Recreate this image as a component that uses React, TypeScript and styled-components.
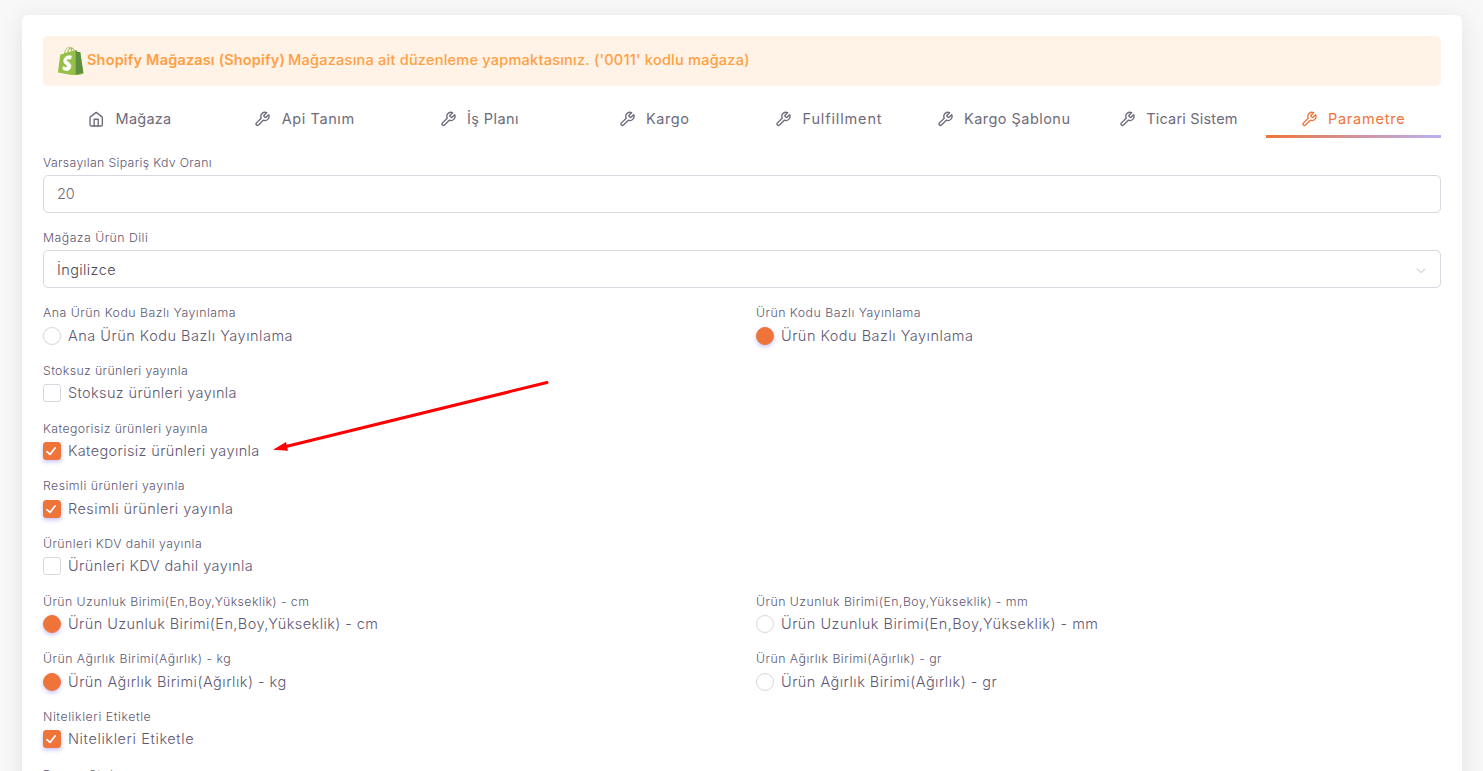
import React from "react";
import styled, { createGlobalStyle, css } from "styled-components";
import { FiHome, FiTool } from "react-icons/fi";

const color = {
  primary: "#ee7439",
  text: "#6e6b7b",
  heading: "#5e5873",
  border: "#d8d6de",
  warning: "#ff9f43",
};

const GlobalStyle = createGlobalStyle`
  *, *::before, *::after { box-sizing: border-box; }
  html, body { margin: 0; height: 771px; overflow: hidden; }
  body {
    background: #f8f8f8;
    color: ${color.text};
    font-family: Inter, "Open Sans", sans-serif;
    font-size: 14.5px;
    font-weight: 300;
  }
`;

const Page = styled.main`
  position: relative;
  height: 771px;
  overflow: hidden;
  padding: 15px 21px 0 22px;
`;

const Card = styled.section`
  height: 800px;
  padding: 21px;
  background: #fff;
  border-radius: 6px;
  box-shadow: 0 4px 24px rgba(34, 41, 47, 0.1);
`;

const Tracked = styled.span<{ $track: number }>`
  letter-spacing: ${(p) => p.$track}px;
  white-space: nowrap;
`;

const Alert = styled.div`
  display: flex;
  align-items: center;
  height: 50px;
  padding: 0 15px;
  border-radius: 5px;
  background: #fff2e6;
  color: ${color.warning};
  font-weight: 500;

  svg {
    margin: -1px 3.5px 0 0;
  }
`;

const AlertName = styled(Tracked)`
  margin: -3px 3px 0 0;
  font-weight: 600;
`;

const AlertText = styled(Tracked)`
  margin-top: -3px;
`;

const Tabs = styled.nav`
  display: grid;
  grid-template-columns: repeat(8, 1fr);
  height: 38px;
  margin-top: 14px;
`;

const Tab = styled.a<{ $active?: boolean }>`
  display: flex;
  align-items: center;
  justify-content: center;
  height: 38px;
  padding: 1px 1px 0 0;
  border-bottom: 3px solid transparent;
  font-weight: 400;

  svg {
    width: 16.4px;
    height: 16.4px;
    margin: 2px 10.8px 0 0;
  }

  ${(p) =>
    p.$active &&
    css`
      color: ${color.primary};
      border-image: linear-gradient(90deg, ${color.primary}, #b9b0f5) 0 0 3 0;
    `}
`;

const Form = styled.form`
  padding-top: 15px;
`;

const Field = styled.div`
  margin-bottom: 15.2px;
`;

const Label = styled.label<{ $track: number }>`
  display: block;
  height: 18px;
  line-height: 19.4px;
  color: ${color.heading};
  font-size: 12.3px;
  letter-spacing: ${(p) => p.$track}px;
  white-space: nowrap;
`;

const Control = styled.div<{ $dark?: boolean }>`
  display: flex;
  align-items: center;
  justify-content: space-between;
  height: 38px;
  margin-top: 4px;
  padding: 0 14px ${(p) => (p.$dark ? 0 : 1)}px 13px;
  border: 1px solid ${color.border};
  border-radius: 5px;
  color: ${(p) => (p.$dark ? "#4b4858" : color.text)};

  svg {
    margin-top: 2px;
  }
`;

const OptionRow = styled.div`
  display: grid;
  grid-template-columns: 1fr 1fr;
  column-gap: 28px;
  height: 57.65px;
`;

const Choice = styled.div`
  display: flex;
  align-items: center;
  height: 18px;
  margin-top: 5.35px;
  color: ${color.heading};
`;

const ChoiceText = styled(Tracked)`
  margin-top: -1px;
`;

const Mark = styled.span<{ $round: boolean; $on?: boolean }>`
  display: flex;
  flex: none;
  width: 18px;
  height: 18px;
  margin-right: 7px;
  padding: 2px;
  border: 1px solid ${(p) => (p.$on ? color.primary : color.border)};
  border-radius: ${(p) => (p.$round ? "50%" : "3px")};
  background: ${(p) => (p.$on ? color.primary : "#fff")};
  box-shadow: ${(p) => (p.$on ? "0 2px 4px rgba(115, 103, 240, 0.4)" : "none")};
`;

const Arrow = styled.svg`
  position: absolute;
  left: 269px;
  top: 376px;
  pointer-events: none;
`;

const ShopifyLogo = () => (
  <svg width="25.5" height="29.5" viewBox="0 0 109.5 124.5" aria-hidden="true">
    <path
      fill="#95bf47"
      d="M95.6 28.2c-.1-.6-.6-1-1.1-1-.5 0-9.3-.2-9.3-.2s-7.4-7.2-8.1-7.9c-.7-.7-2.2-.5-2.7-.3 0 0-1.4.4-3.7 1.1-.4-1.3-1-2.8-1.8-4.4-2.6-5-6.5-7.7-11.1-7.7-.3 0-.6 0-1 .1-.1-.2-.3-.3-.4-.5-2-2.2-4.6-3.2-7.7-3.1-6 .2-12 4.5-16.8 12.2-3.4 5.4-6 12.2-6.8 17.5-6.9 2.1-11.7 3.6-11.8 3.7-3.5 1.1-3.6 1.2-4 4.5-.3 2.5-9.5 73-9.5 73l76.4 13.2 33.1-8.2S95.7 28.8 95.6 28.2zM66.9 20.9c-1.8.6-3.8 1.2-5.9 1.8 0-3-.4-7.3-1.8-10.9 4.5.9 6.8 5.8 7.7 9.1zM57 23.9c-4 1.2-8.4 2.6-12.8 3.9 1.2-4.7 3.6-9.4 6.4-12.5 1.1-1.1 2.6-2.4 4.3-3.2 1.7 3.5 2.1 8.4 2.1 11.8zM49.1 6.4c1.4 0 2.6.3 3.6.9-1.6.8-3.2 2.1-4.7 3.6-3.8 4.1-6.7 10.5-7.9 16.6-3.6 1.1-7.2 2.2-10.5 3.2C31.9 21.1 39.9 6.6 49.1 6.4z"
      transform="translate(0 -2)"
    />
    <path
      fill="#5e8e3e"
      d="M94.5 27.2c-.5 0-9.3-.2-9.3-.2s-7.4-7.2-8.1-7.9c-.3-.3-.6-.4-1-.5v105.7l33.1-8.2S95.7 28.8 95.6 28.2c-.1-.6-.6-1-1.1-1z"
      transform="translate(0 -2)"
    />
    <path
      fill="#fff"
      d="M57.9 45.5l-3.9 14.4s-4.3-2-9.4-1.6c-7.5.5-7.5 5.2-7.5 6.4.4 6.4 17.3 7.8 18.3 22.9.7 11.9-6.3 20-16.4 20.6-12.1.8-18.7-6.2-18.7-6.2l2.6-11s6.8 5.1 12.2 4.7c3.5-.2 4.8-3.1 4.7-5.1-.5-8.4-14.3-7.9-15.2-21.7-.7-11.6 6.9-23.4 23.7-24.4 6.6-.4 9.6 1 9.6 1z"
      stroke="#fff"
      strokeWidth="3"
      transform="translate(0 -4)"
    />
  </svg>
);

const CheckIcon = () => (
  <svg width="12" height="12" viewBox="0 0 12 12" fill="none" aria-hidden="true">
    <path d="M0.9 6.6 4 9.4 9.2 2.8" stroke="#fff" strokeWidth="1.7" strokeLinecap="round" strokeLinejoin="round" />
  </svg>
);

const ChevronIcon = () => (
  <svg width="10" height="8" viewBox="0 0 10 8" fill="none" aria-hidden="true">
    <path d="M1 3 5 6.6 9 3" stroke={color.border} strokeWidth="1.2" strokeLinecap="round" strokeLinejoin="round" />
  </svg>
);

const tabs: { text: string; track: number; home?: boolean; active?: boolean }[] = [
  { text: "Mağaza", track: 0.22, home: true },
  { text: "Api Tanım", track: 0.6 },
  { text: "İş Planı", track: 0.4 },
  { text: "Kargo", track: 0.55 },
  { text: "Fulfillment", track: 0.86 },
  { text: "Kargo Şablonu", track: 0.46 },
  { text: "Ticari Sistem", track: 0.2 },
  { text: "Parametre", track: 0.78, active: true },
];

interface Option {
  text: string;
  labelTrack: number;
  track: number;
  round?: boolean;
  on?: boolean;
}

const rows: Option[][] = [
  [
    { text: "Ana Ürün Kodu Bazlı Yayınlama", labelTrack: 0.5, track: 0.5, round: true },
    { text: "Ürün Kodu Bazlı Yayınlama", labelTrack: 0.49, track: 0.49, round: true, on: true },
  ],
  [{ text: "Stoksuz ürünleri yayınla", labelTrack: 0.39, track: 0.37 }],
  [{ text: "Kategorisiz ürünleri yayınla", labelTrack: 0.4, track: 0.37, on: true }],
  [{ text: "Resimli ürünleri yayınla", labelTrack: 0.47, track: 0.47, on: true }],
  [{ text: "Ürünleri KDV dahil yayınla", labelTrack: 0.45, track: 0.44 }],
  [
    { text: "Ürün Uzunluk Birimi(En,Boy,Yükseklik) - cm", labelTrack: 0.43, track: 0.42, round: true, on: true },
    { text: "Ürün Uzunluk Birimi(En,Boy,Yükseklik) - mm", labelTrack: 0.48, track: 0.48, round: true },
  ],
  [
    { text: "Ürün Ağırlık Birimi(Ağırlık) - kg", labelTrack: 0.49, track: 0.48, round: true, on: true },
    { text: "Ürün Ağırlık Birimi(Ağırlık) - gr", labelTrack: 0.48, track: 0.47, round: true },
  ],
  [{ text: "Nitelikleri Etiketle", labelTrack: 0.57, track: 0.6, on: true }],
];

export default function App() {
  return (
    <>
      <GlobalStyle />
      <Page>
        <Card>
          <Alert>
            <ShopifyLogo />
            <AlertName $track={0.165}>Shopify Mağazası (Shopify)</AlertName>
            <AlertText $track={0.24}>
              Mağazasına ait düzenleme yapmaktasınız. ('0011' kodlu mağaza)
            </AlertText>
          </Alert>
          <Tabs>
            {tabs.map((tab) => (
              <Tab key={tab.text} $active={tab.active}>
                {tab.home ? <FiHome /> : <FiTool />}
                <Tracked $track={tab.track}>{tab.text}</Tracked>
              </Tab>
            ))}
          </Tabs>
          <Form>
            <Field>
              <Label $track={0.33}>Varsayılan Sipariş Kdv Oranı</Label>
              <Control>
                <Tracked $track={-0.2}>20</Tracked>
              </Control>
            </Field>
            <Field>
              <Label $track={0.47}>Mağaza Ürün Dili</Label>
              <Control $dark>
                <Tracked $track={0.4}>İngilizce</Tracked>
                <ChevronIcon />
              </Control>
            </Field>
            {rows.map((row) => (
              <OptionRow key={row[0].text}>
                {row.map((option) => (
                  <div key={option.text}>
                    <Label $track={option.labelTrack}>{option.text}</Label>
                    <Choice>
                      <Mark $round={!!option.round} $on={option.on}>
                        {option.on && !option.round && <CheckIcon />}
                      </Mark>
                      <ChoiceText $track={option.track}>{option.text}</ChoiceText>
                    </Choice>
                  </div>
                ))}
              </OptionRow>
            ))}
            <Label $track={0.9}>Barem Stok</Label>
          </Form>
        </Card>
        <Arrow width="284" height="80" viewBox="270 376 284 80" aria-hidden="true">
          <path d="M286 446.8 548 382.5" stroke="#fe0000" strokeWidth="3" strokeLinecap="round" />
          <path d="M274 449.7 287 442 289 450.7z" fill="#fe0000" />
        </Arrow>
      </Page>
    </>
  );
}
